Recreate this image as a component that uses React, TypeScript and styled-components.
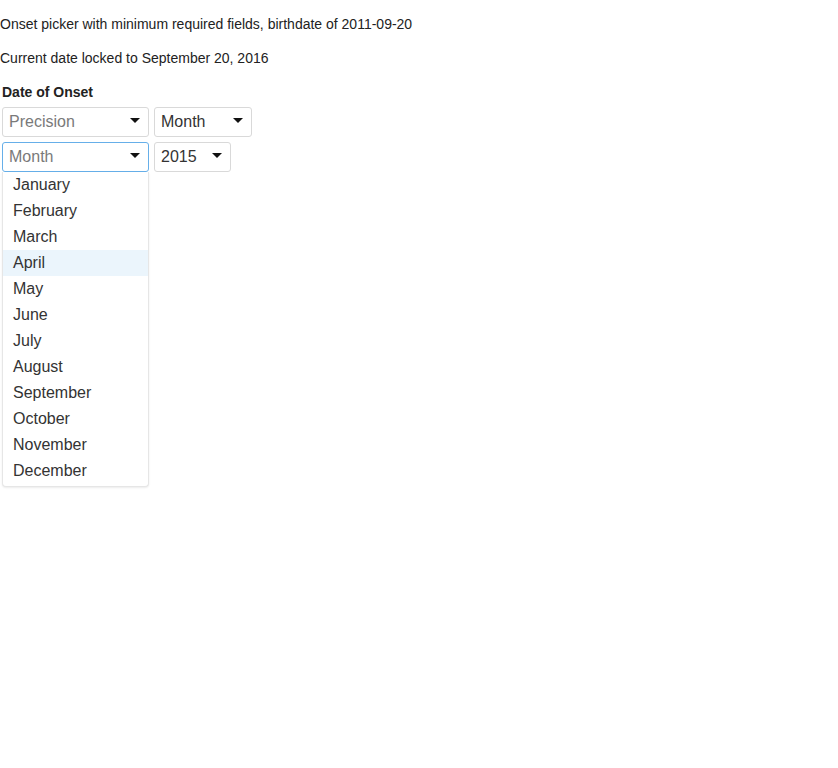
import styled, { createGlobalStyle } from "styled-components"

const GlobalStyle = createGlobalStyle`
	html, body {
		margin: 0;
		min-height: 100%;
		font-family: "Liberation Sans", Arial, Helvetica, sans-serif;
		color: #222;
		background: #fff;
	}
`

const Page = styled.div`
	min-height: 768px;
`

const Note = styled.p`
	margin: 14px 0;
	font-size: 14px;
	line-height: 20px;
`

const Picker = styled.div`
	padding: 0 2px;
`

const Label = styled.div`
	font-size: 14px;
	font-weight: bold;
	line-height: 20px;
	margin-bottom: 5px;
`

const Row = styled.div`
	display: flex;
	gap: 5px;
	margin-bottom: 5px;
`

const SelectWrap = styled.div`
	position: relative;
`

const SelectBox = styled.div<{ $width: number; $focused?: boolean }>`
	box-sizing: border-box;
	display: flex;
	align-items: center;
	width: ${p => p.$width}px;
	height: 30px;
	padding: 0 8px 0 6px;
	border: 1px solid ${p => (p.$focused ? "#66afe9" : "#d9d9d9")};
	border-radius: 3px;
	background: #fff;
	font-size: 16px;
	color: #333;
`

const Value = styled.span<{ $placeholder?: boolean }>`
	flex: 1;
	color: ${p => (p.$placeholder ? "#7a7a7a" : "#333")};
`

const Caret = styled.span`
	width: 0;
	height: 0;
	border-left: 5px solid transparent;
	border-right: 5px solid transparent;
	border-top: 5px solid #111;
	margin-bottom: 3px;
`

const Menu = styled.div`
	position: absolute;
	top: 30px;
	left: 0;
	box-sizing: border-box;
	width: 147px;
	padding-bottom: 2px;
	background: #fff;
	border: 1px solid #e6e6e6;
	border-top: none;
	border-radius: 0 0 4px 4px;
	box-shadow: 0 1px 2px rgba(0, 0, 0, 0.08);
	z-index: 2;
`

const MenuItem = styled.div<{ $active?: boolean }>`
	height: 26px;
	line-height: 26px;
	padding: 0 10px;
	font-size: 16px;
	color: #333;
	background: ${p => (p.$active ? "#ebf5fc" : "transparent")};
`

const months = [
	"January",
	"February",
	"March",
	"April",
	"May",
	"June",
	"July",
	"August",
	"September",
	"October",
	"November",
	"December",
]

const Select = ({
	width,
	value,
	placeholder,
	focused,
	children,
}: {
	width: number
	value?: string
	placeholder?: string
	focused?: boolean
	children?: React.ReactNode
}) => (
	<SelectWrap>
		<SelectBox $width={width} $focused={focused}>
			<Value $placeholder={!value}>{value || placeholder}</Value>
			<Caret />
		</SelectBox>
		{children}
	</SelectWrap>
)

const App = () => {
	return (
		<Page>
			<GlobalStyle />
			<Note>Onset picker with minimum required fields, birthdate of 2011-09-20</Note>
			<Note>Current date locked to September 20, 2016</Note>
			<Picker>
				<Label>Date of Onset</Label>
				<Row>
					<Select width={147} placeholder="Precision" />
					<Select width={98} value="Month" />
				</Row>
				<Row>
					<Select width={147} placeholder="Month" focused>
						<Menu>
							{months.map(m => (
								<MenuItem key={m} $active={m === "April"}>
									{m}
								</MenuItem>
							))}
						</Menu>
					</Select>
					<Select width={77} value="2015" />
				</Row>
			</Picker>
		</Page>
	)
}

export default App
